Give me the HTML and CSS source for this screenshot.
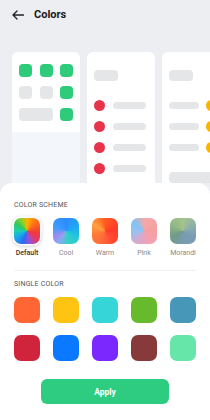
FILE: index.html
```html
<!DOCTYPE html>
<html>
<head>
<meta charset="utf-8">
<link rel="stylesheet" href="styles.css">
</head>
<body>
<div class="page">
  <header class="header">
    <svg class="back" width="12" height="10" viewBox="0 0 12 10"><path d="M11.5 5H1M5 1L1 5l4 4" fill="none" stroke="#222" stroke-width="1.3" stroke-linecap="round" stroke-linejoin="round"/></svg>
    <span class="title">Colors</span>
  </header>

  <div class="preview">
    <div class="card card1">
      <div class="card1-top">
        <div class="grid3">
          <span class="sq g"></span><span class="sq g"></span><span class="sq g"></span>
          <span class="sq e"></span><span class="sq e"></span><span class="sq g"></span>
          <span class="bar2"></span><span class="sq g"></span>
        </div>
      </div>
    </div>
    <div class="card card2">
      <span class="pill"></span>
      <div class="rows">
        <div class="row"><span class="dot red"></span><span class="line"></span></div>
        <div class="row"><span class="dot red"></span><span class="line"></span></div>
        <div class="row"><span class="dot red"></span><span class="line"></span></div>
        <div class="row"><span class="dot red"></span><span class="line"></span></div>
      </div>
    </div>
    <div class="card card3">
      <span class="pill"></span>
      <div class="rows">
        <div class="row"><span class="line short"></span><span class="dot yel"></span></div>
        <div class="row"><span class="line short"></span><span class="dot yel"></span></div>
        <div class="row"><span class="line short"></span><span class="dot yel"></span></div>
      </div>
      <span class="widebar"></span>
    </div>
  </div>

  <section class="sheet">
    <div class="label">COLOR SCHEME</div>
    <div class="schemes">
      <div class="scheme"><span class="sw default selected"></span><span class="sname active">Default</span></div>
      <div class="scheme"><span class="sw cool"></span><span class="sname">Cool</span></div>
      <div class="scheme"><span class="sw warm"></span><span class="sname">Warm</span></div>
      <div class="scheme"><span class="sw pink"></span><span class="sname">Pink</span></div>
      <div class="scheme"><span class="sw morandi"></span><span class="sname">Morandi</span></div>
    </div>
    <div class="divider"></div>
    <div class="label">SINGLE COLOR</div>
    <div class="singles">
      <span class="sw c1"></span><span class="sw c2"></span><span class="sw c3"></span><span class="sw c4"></span><span class="sw c5"></span>
      <span class="sw c6"></span><span class="sw c7"></span><span class="sw c8"></span><span class="sw c9"></span><span class="sw c10"></span>
    </div>
    <div class="actions"><button class="apply">Apply</button></div>
  </section>
</div>
</body>
</html>
```

FILE: styles.css
```css
* { box-sizing: border-box; }
html, body { margin: 0; padding: 0; }
body {
  background: #eceef1;
  font-family: Roboto, "Liberation Sans", sans-serif;
  width: 210px;
  height: 420px;
  overflow: hidden;
}
.page { width: 210px; height: 420px; display: flex; flex-direction: column; }

.header {
  height: 28px;
  display: flex;
  align-items: center;
  padding-left: 12px;
  gap: 10px;
}
.back { display: block; margin-top: 1px; }
.title { font-size: 11px; font-weight: 700; color: #1a1a1a; }

.preview {
  margin-top: 24px;
  height: 131px;
  overflow: hidden;
  display: flex;
  gap: 7px;
  padding-left: 12px;
  flex-shrink: 0;
}
.card {
  flex: 0 0 68px;
  height: 160px;
  background: #fff;
  border-radius: 6px;
}
.card1 { background: #f3f6fa; }
.card1-top {
  background: #fff;
  height: 80px;
  border-radius: 6px 6px 0 0;
  padding: 12px 7px 0 7px;
}
.grid3 {
  display: grid;
  grid-template-columns: 13px 13px 13px;
  column-gap: 7.5px;
  row-gap: 9px;
}
.sq { width: 13px; height: 13px; border-radius: 4px; display: block; }
.sq.g { background: #2ecc7a; }
.sq.e { background: #e4e6e8; }
.bar2 { grid-column: span 2; height: 13px; border-radius: 4px; background: #e4e6e8; }

.card2, .card3 { padding: 18px 0 0 7px; }
.pill { display: block; width: 24px; height: 11px; border-radius: 4px; background: #e4e6e8; }
.rows { margin-top: 19px; display: flex; flex-direction: column; gap: 10px; }
.row { display: flex; align-items: center; gap: 8px; height: 11px; }
.dot { width: 11px; height: 11px; border-radius: 50%; flex: 0 0 11px; }
.dot.red { background: #e8344a; }
.dot.yel { background: #f7b500; }
.line { width: 33px; height: 7px; border-radius: 3.5px; background: #e4e6e8; }
.line.short { width: 30px; }
.card3 .row { gap: 7px; }
.widebar { display: block; margin-top: 19px; width: 60px; height: 11px; border-radius: 4px; background: #e4e6e8; }

.sheet {
  flex: 1;
  background: #fff;
  border-radius: 12px 12px 0 0;
  padding: 18px 14px 0 14px;
}
.label {
  font-size: 7px;
  color: #555;
  letter-spacing: 0.2px;
  line-height: 9px;
}
.schemes {
  margin-top: 8px;
  display: flex;
  gap: 13px;
}
.scheme { display: flex; flex-direction: column; align-items: center; width: 26px; }
.sw { display: block; width: 26px; height: 26px; border-radius: 7px; }
.sname { margin-top: 5px; font-size: 7px; color: #888; line-height: 9px; white-space: nowrap; }
.sname.active { color: #333; font-weight: 500; }
.selected { box-shadow: 0 0 0 1.5px #fff, 0 1px 4px 1px rgba(0,0,0,0.22); }

.default { background: conic-gradient(from 0deg, #ffb300 0deg, #ff6a1a 50deg, #f03a3a 100deg, #e23a6a 135deg, #9a4fd8 165deg, #2e6cf0 200deg, #1aa3f0 235deg, #1ccfb0 270deg, #34c85a 305deg, #8cd02a 335deg, #ffb300 360deg); }
.cool { background: conic-gradient(from 0deg, #2d8cff 0deg, #1fa8f5 70deg, #22c8d8 120deg, #38d0c8 170deg, #8aa8f0 215deg, #a08cf0 240deg, #3b9cff 290deg, #2d8cff 360deg); }
.warm { background: conic-gradient(from 0deg, #ff5a1f 0deg, #ff3b2a 80deg, #ff4a30 140deg, #ff6a3a 200deg, #ff7a35 250deg, #ffa040 300deg, #ff5a1f 360deg); }
.pink { background: conic-gradient(from 0deg, #f5a8a8 0deg, #f6a0a0 80deg, #f4a0b0 150deg, #d8a8cc 210deg, #9ec0ee 260deg, #80c4f5 310deg, #f5a8a8 360deg); }
.morandi { background: conic-gradient(from 0deg, #a6c48c 0deg, #8eb0a8 60deg, #7a9cb4 120deg, #7a9cb0 180deg, #6f9a88 240deg, #92b884 300deg, #a6c48c 360deg); }

.divider { height: 1px; background: #f0f0f0; margin: 12px 0 9px 0; }

.singles {
  margin-top: 8px;
  display: grid;
  grid-template-columns: repeat(5, 26px);
  column-gap: 13px;
  row-gap: 12px;
}
.c1 { background: #ff6633; }
.c2 { background: #ffc412; }
.c3 { background: #36d6d8; }
.c4 { background: #66ba2c; }
.c5 { background: #4697b8; }
.c6 { background: #d0243c; }
.c7 { background: #0a78ff; }
.c8 { background: #7a28ff; }
.c9 { background: #883a3a; }
.c10 { background: #66e6a8; }

.actions { display: flex; justify-content: center; margin-top: 18px; }
.apply {
  width: 128px;
  height: 25px;
  border: none;
  border-radius: 6px;
  background: #2ecc80;
  color: #fff;
  font-family: Roboto, "Liberation Sans", sans-serif;
  font-size: 8.5px;
  font-weight: 700;
}
```
